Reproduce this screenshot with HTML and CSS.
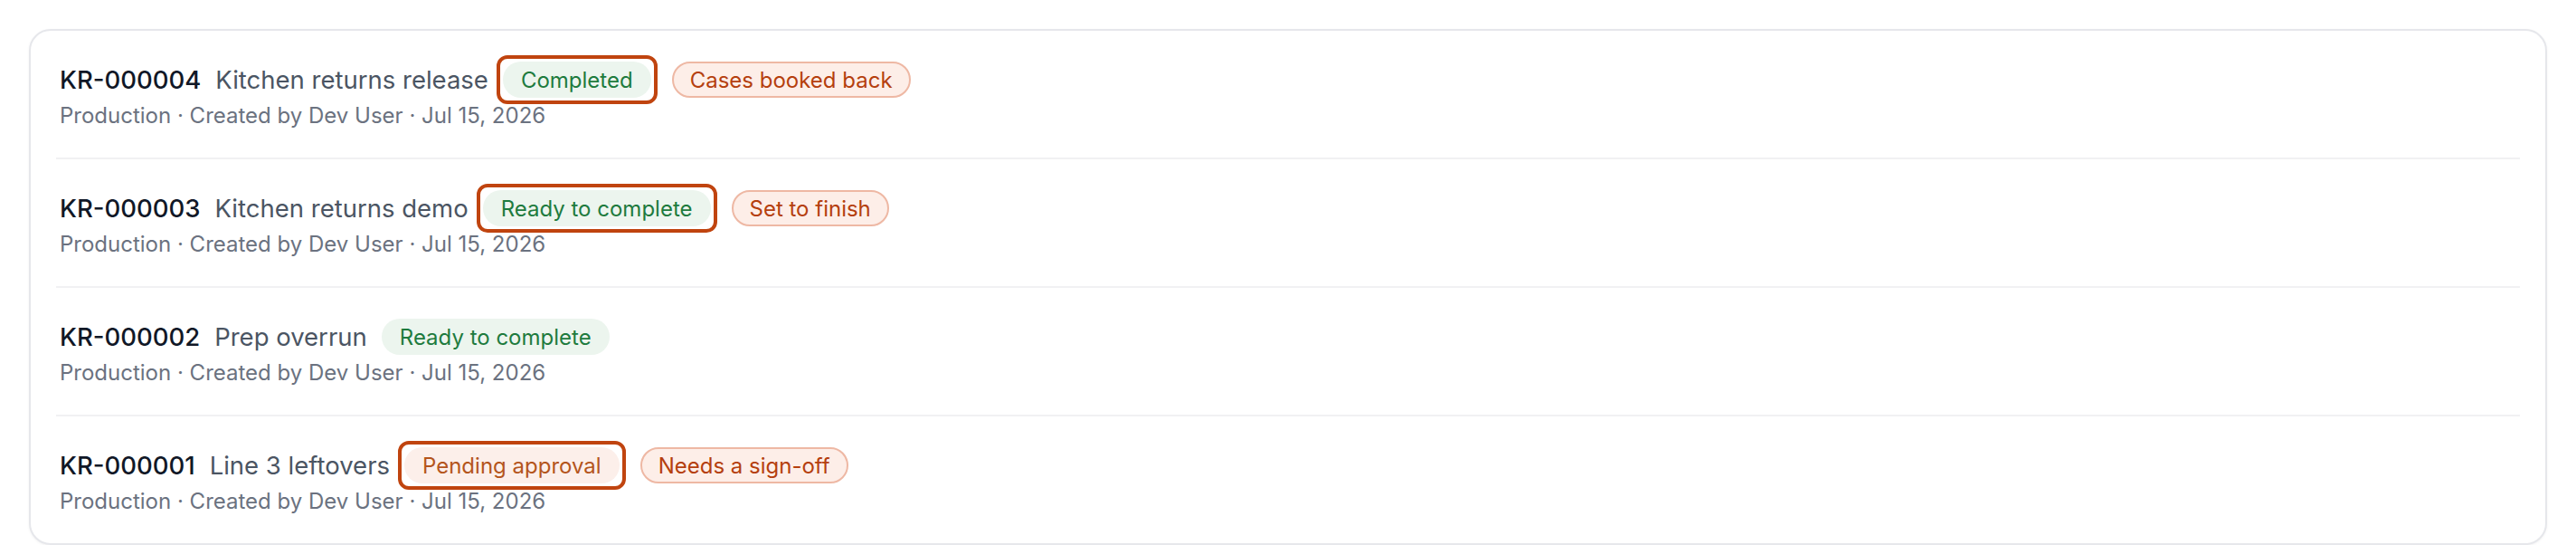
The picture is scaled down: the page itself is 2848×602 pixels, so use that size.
FILE: index.html
```html
<!DOCTYPE html>
<html lang="en">
<head>
  <meta charset="UTF-8" />
  <meta name="viewport" content="width=device-width, initial-scale=1.0" />
  <title>Kitchen returns</title>
  <link rel="stylesheet" href="styles.css">
</head>
<body>
  <div class="returns-card">
    <div class="return-row">
      <div class="return-head">
        <span class="return-id">KR-000004</span>
        <span class="return-name">Kitchen returns release</span>
        <span class="ring"><span class="pill pill-green">Completed</span></span>
        <span class="pill pill-alert">Cases booked back</span>
      </div>
      <div class="return-meta">Production · Created by Dev User · Jul 15, 2026</div>
    </div>

    <div class="return-row">
      <div class="return-head">
        <span class="return-id">KR-000003</span>
        <span class="return-name">Kitchen returns demo</span>
        <span class="ring"><span class="pill pill-green">Ready to complete</span></span>
        <span class="pill pill-alert">Set to finish</span>
      </div>
      <div class="return-meta">Production · Created by Dev User · Jul 15, 2026</div>
    </div>

    <div class="return-row">
      <div class="return-head">
        <span class="return-id">KR-000002</span>
        <span class="return-name">Prep overrun</span>
        <span class="pill pill-green">Ready to complete</span>
      </div>
      <div class="return-meta">Production · Created by Dev User · Jul 15, 2026</div>
    </div>

    <div class="return-row">
      <div class="return-head">
        <span class="return-id">KR-000001</span>
        <span class="return-name">Line 3 leftovers</span>
        <span class="ring"><span class="pill pill-pending">Pending approval</span></span>
        <span class="pill pill-alert">Needs a sign-off</span>
      </div>
      <div class="return-meta">Production · Created by Dev User · Jul 15, 2026</div>
    </div>
  </div>
</body>
</html>
```

FILE: styles.css
```css
* {
  box-sizing: border-box;
  margin: 0;
  padding: 0;
}

body {
  background-color: #fff;
  font-family: 'Inter', 'Noto Sans', sans-serif;
  font-size: 24px;
  padding: 32px;
}

.returns-card {
  background-color: #fff;
  border: 2px solid #e6e7eb;
  border-radius: 24px;
  box-shadow: 0 1px 3px rgba(0, 0, 0, 0.05);
  padding: 0 28px;
}

.return-row {
  padding: 34px 4px 30px;
  border-bottom: 2px solid #f1f1f3;
}

.return-row:last-child {
  border-bottom: none;
}

.return-head {
  display: flex;
  align-items: center;
  gap: 16px;
  height: 40px;
  margin-bottom: 4px;
}

.return-id {
  color: #111827;
  font-size: 27.5px;
  font-weight: 500;
}

.return-name {
  color: #4b5563;
  font-size: 27.5px;
}

.return-meta {
  color: #6b7280;
  line-height: 32px;
}

.pill {
  display: inline-flex;
  align-items: center;
  height: 40px;
  padding: 0 20px;
  border-radius: 20px;
  white-space: nowrap;
}

.pill-green {
  background-color: #ecf5ee;
  color: #1e7b3e;
}

.pill-pending {
  background-color: #fcefea;
  color: #b4551c;
}

.pill-alert {
  background-color: #fdeee8;
  border: 2px solid #eeb8a4;
  color: #b53f0e;
  padding: 0 18px;
}

/* selected badge */
.ring {
  display: inline-flex;
  padding: 3px;
  border: 4px solid #c0440f;
  border-radius: 12px;
  margin-left: -7px;
  margin-top: -14px;
  margin-bottom: -14px;
}
```
